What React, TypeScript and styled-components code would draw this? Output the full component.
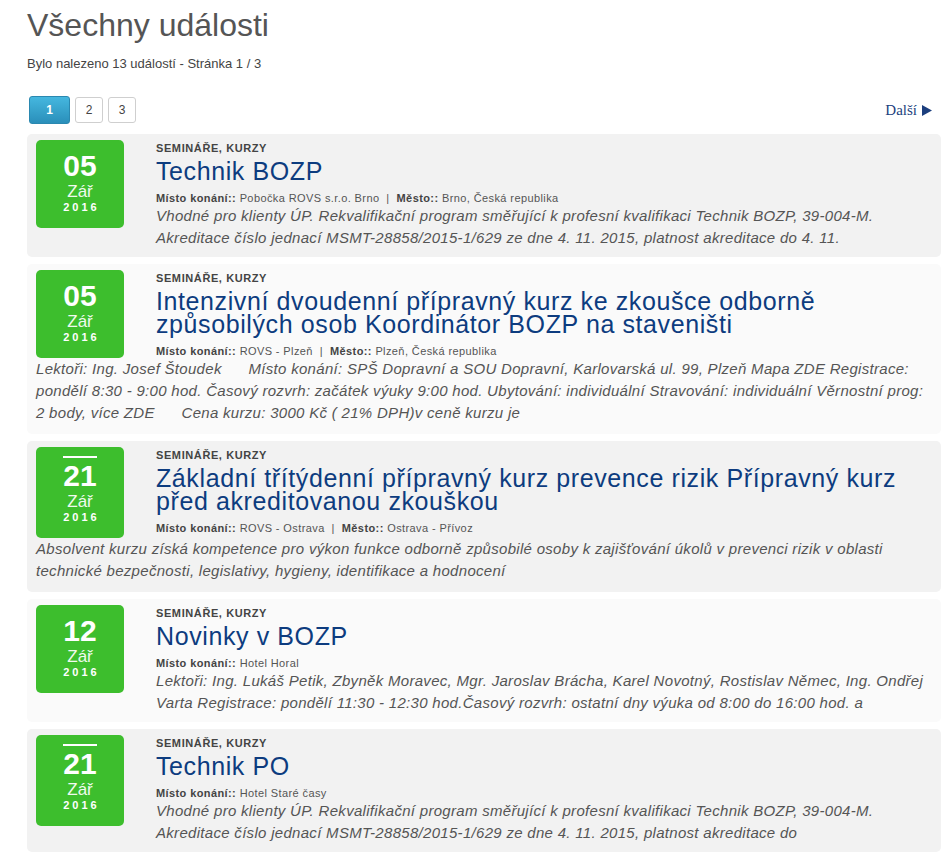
import React from "react";
import styled, { createGlobalStyle } from "styled-components";

const GlobalStyle = createGlobalStyle`
  html, body {
    margin: 0;
    padding: 0;
    background: #ffffff;
  }
  body {
    font-family: "Liberation Sans", Arial, sans-serif;
    color: #555555;
  }
`;

type Event = {
  day: string;
  month: string;
  year: string;
  overline?: boolean;
  title: string;
  place: string;
  city?: string;
  desc: string;
  wide?: boolean;
};

const gap = "\u00a0\u00a0\u00a0\u00a0\u00a0 ";

const events: Event[] = [
  {
    day: "05",
    month: "Zář",
    year: "2016",
    title: "Technik BOZP",
    place: "Pobočka ROVS s.r.o. Brno",
    city: "Brno, Česká republika",
    desc: "Vhodné pro klienty ÚP. Rekvalifikační program směřující k profesní kvalifikaci Technik BOZP, 39-004-M. Akreditace číslo jednací MSMT-28858/2015-1/629 ze dne 4. 11. 2015, platnost akreditace do 4. 11.",
  },
  {
    day: "05",
    month: "Zář",
    year: "2016",
    title:
      "Intenzivní dvoudenní přípravný kurz ke zkoušce odborně způsobilých osob Koordinátor BOZP na staveništi",
    place: "ROVS - Plzeň",
    city: "Plzeň, Česká republika",
    desc: `Lektoři: Ing. Josef Štoudek${gap}Místo konání: SPŠ Dopravní a SOU Dopravní, Karlovarská ul. 99, Plzeň Mapa ZDE Registrace: pondělí 8:30 - 9:00 hod. Časový rozvrh: začátek výuky 9:00 hod. Ubytování: individuální Stravování: individuální Věrnostní prog: 2 body, více ZDE${gap}Cena kurzu: 3000 Kč ( 21% DPH)v ceně kurzu je`,
    wide: true,
  },
  {
    day: "21",
    month: "Zář",
    year: "2016",
    overline: true,
    title:
      "Základní třítýdenní přípravný kurz prevence rizik Přípravný kurz před akreditovanou zkouškou",
    place: "ROVS - Ostrava",
    city: "Ostrava - Přívoz",
    desc: "Absolvent kurzu získá kompetence pro výkon funkce odborně způsobilé osoby k zajišťování úkolů v prevenci rizik v oblasti technické bezpečnosti, legislativy, hygieny, identifikace a hodnocení",
    wide: true,
  },
  {
    day: "12",
    month: "Zář",
    year: "2016",
    title: "Novinky v BOZP",
    place: "Hotel Horal",
    desc: "Lektoři: Ing. Lukáš Petik, Zbyněk Moravec, Mgr. Jaroslav Brácha, Karel Novotný, Rostislav Němec, Ing. Ondřej Varta Registrace: pondělí 11:30 - 12:30 hod.Časový rozvrh: ostatní dny výuka od 8:00 do 16:00 hod. a",
  },
  {
    day: "21",
    month: "Zář",
    year: "2016",
    overline: true,
    title: "Technik PO",
    place: "Hotel Staré časy",
    desc: "Vhodné pro klienty ÚP. Rekvalifikační program směřující k profesní kvalifikaci Technik BOZP, 39-004-M. Akreditace číslo jednací MSMT-28858/2015-1/629 ze dne 4. 11. 2015, platnost akreditace do",
  },
];

const Page = styled.div`
  padding: 6px 11px 0 27px;
`;

const Heading = styled.h1`
  margin: 0;
  font-size: 32px;
  line-height: 38px;
  font-weight: normal;
  color: #555555;
`;

const Found = styled.p`
  margin: 12px 0 0;
  font-size: 13px;
  line-height: 16px;
  color: #444444;
`;

const Pager = styled.div`
  display: flex;
  align-items: center;
  justify-content: space-between;
  margin-top: 24px;
  padding-left: 2px;
  padding-right: 9px;
`;

const Pages = styled.div`
  display: flex;
  align-items: center;
  gap: 5px;
`;

const PageButton = styled.span<{ $active?: boolean }>`
  display: flex;
  align-items: center;
  justify-content: center;
  box-sizing: border-box;
  width: ${(p) => (p.$active ? "41px" : "28px")};
  height: ${(p) => (p.$active ? "28px" : "26px")};
  border-radius: 3px;
  font-size: 12px;
  font-weight: ${(p) => (p.$active ? "bold" : "normal")};
  color: ${(p) => (p.$active ? "#ffffff" : "#444444")};
  background: ${(p) =>
    p.$active ? "linear-gradient(#45b7df, #2a8fba)" : "#ffffff"};
  border: 1px solid ${(p) => (p.$active ? "#2a88b0" : "#cfcfcf")};
`;

const Next = styled.a`
  display: flex;
  align-items: center;
  gap: 5px;
  font-family: "Liberation Serif", "Times New Roman", serif;
  font-size: 15px;
  color: #1c3f7e;
  text-decoration: none;
`;

const List = styled.div`
  display: flex;
  flex-direction: column;
  gap: 7px;
  margin-top: 10px;
`;

const Card = styled.div<{ $odd: boolean }>`
  background: ${(p) => (p.$odd ? "#f2f2f2" : "#fafafa")};
  border-radius: 5px;
  padding: 6px 9px 8px;
`;

const Top = styled.div`
  display: flex;
  align-items: flex-start;
  gap: 32px;
`;

const DateBox = styled.div`
  flex: 0 0 88px;
  box-sizing: border-box;
  padding: 11px 0 14px;
  border-radius: 5px;
  background: #3dbe2d;
  color: #ffffff;
  display: flex;
  flex-direction: column;
  align-items: center;
  text-align: center;
`;

const Day = styled.span<{ $over?: boolean }>`
  display: inline-block;
  font-size: 30px;
  line-height: 30px;
  font-weight: bold;
  border-top: ${(p) => (p.$over ? "2px solid #ffffff" : "0")};
  padding-top: ${(p) => (p.$over ? "3px" : "0")};
  margin-top: ${(p) => (p.$over ? "-2px" : "0")};
`;

const Month = styled.span`
  font-size: 17px;
  line-height: 19px;
  margin-top: 1px;
  color: #f0faee;
`;

const Year = styled.span`
  font-size: 11px;
  line-height: 13px;
  font-weight: bold;
  letter-spacing: 3px;
  padding-left: 3px;
`;

const Head = styled.div`
  flex: 1;
  min-width: 0;
`;

const Category = styled.div`
  margin-top: 1px;
  font-size: 11px;
  line-height: 14px;
  font-weight: bold;
  letter-spacing: 0.6px;
  color: #444444;
`;

const Title = styled.a`
  display: block;
  margin-top: 5px;
  font-size: 25px;
  line-height: 23px;
  letter-spacing: 0.6px;
  color: #0d3c7f;
  text-decoration: none;
`;

const Meta = styled.div`
  margin-top: 8px;
  font-size: 11px;
  line-height: 14px;
  letter-spacing: 0.4px;
  color: #555555;

  b {
    color: #444444;
  }
`;

const Desc = styled.p<{ $wide?: boolean }>`
  margin: 0 0 ${(p) => (p.$wide ? "2px" : "0")};
  font-size: 15px;
  line-height: 22px;
  letter-spacing: 0.3px;
  font-style: italic;
  color: #555555;
`;

function EventCard({ ev, odd }: { ev: Event; odd: boolean }) {
  const desc = <Desc $wide={ev.wide}>{ev.desc}</Desc>;
  return (
    <Card $odd={odd}>
      <Top>
        <DateBox>
          <Day $over={ev.overline}>{ev.day}</Day>
          <Month>{ev.month}</Month>
          <Year>{ev.year}</Year>
        </DateBox>
        <Head>
          <Category>SEMINÁŘE, KURZY</Category>
          <Title href="#">{ev.title}</Title>
          <Meta>
            <b>Místo konání::</b> {ev.place}
            {ev.city && (
              <>
                {" \u00a0|\u00a0 "}
                <b>Město::</b> {ev.city}
              </>
            )}
          </Meta>
          {!ev.wide && desc}
        </Head>
      </Top>
      {ev.wide && desc}
    </Card>
  );
}

export default function App() {
  return (
    <>
      <GlobalStyle />
      <Page>
        <Heading>Všechny události</Heading>
        <Found>Bylo nalezeno 13 událostí - Stránka 1 / 3</Found>
        <Pager>
          <Pages>
            <PageButton $active>1</PageButton>
            <PageButton>2</PageButton>
            <PageButton>3</PageButton>
          </Pages>
          <Next href="#">
            Další
            <svg width="10" height="11" viewBox="0 0 10 11">
              <path d="M0 0 L10 5.5 L0 11 Z" fill="#1c3f7e" />
            </svg>
          </Next>
        </Pager>
        <List>
          {events.map((ev, i) => (
            <EventCard key={i} ev={ev} odd={i % 2 === 0} />
          ))}
        </List>
      </Page>
    </>
  );
}
